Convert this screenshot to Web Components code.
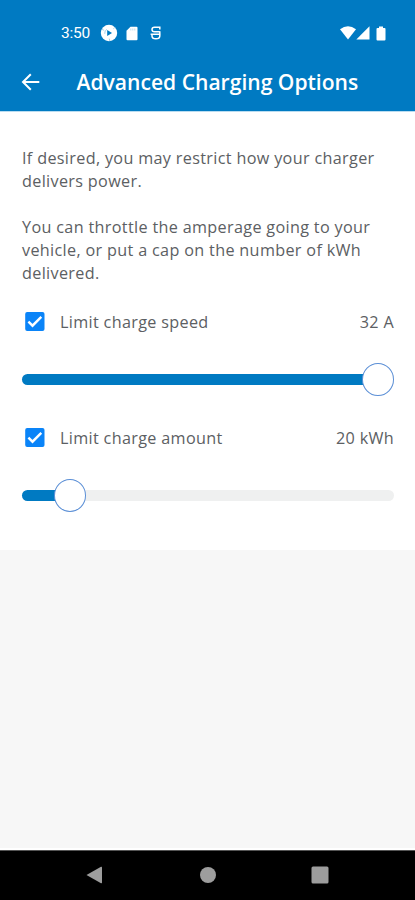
<!DOCTYPE html>
<html lang="en">
<head>
<meta charset="utf-8">
<title>Advanced Charging Options</title>
<style>
html, body { margin: 0; height: 900px; overflow: hidden; }
body { background: #f7f7f7; color: #5c6063; font: 16.2px/23px "Open Sans", sans-serif; letter-spacing: .33px; }
</style>
</head>
<body>
<charging-screen></charging-screen>
<script>
function define(name, html, setup) {
  const template = document.createElement('template');
  template.innerHTML = html;
  customElements.define(name, class extends HTMLElement {
    constructor() {
      super();
      this.attachShadow({ mode: 'open' }).append(template.content.cloneNode(true));
    }
    connectedCallback() { if (setup) setup(this); }
  });
}

define('status-bar', `
<style>
:host { display: flex; align-items: center; height: 24px; padding: 21px 28px 0 61px; color: #fff; font: 400 15.5px/24px Roboto, sans-serif; }
span { width: 39px; letter-spacing: -.2px; }
svg { fill: #fff; display: block; }
.gap { flex: 1; }
</style>
<span>3:50</span>
<svg width="18" height="18" viewBox="0 0 18 18"><circle cx="9" cy="9" r="8.200"/><path d="M7.200 6 12 9l-4.800 3z" fill="#007ac2"/><path d="M4.800 9.800A4.200 4.200 0 0 1 7 5.300M2 5.400l2.200 1M9.800 17l-.5-2.400M14.800 3.500l-1.500 1.300" fill="none" stroke="#007ac2" stroke-width=".8" opacity=".45"/></svg>
<svg width="12" height="15" viewBox="0 0 12 15" style="margin-left:8px"><path d="M4.500 .7H10.500q1 0 1 1v11.500q0 1-1 1H1.500q-1 0-1-1V4.700z"/><path d="M4.800 2.500v2M6.800 2.500v2M8.800 2.500v2" stroke="#007ac2" stroke-width=".8" opacity=".3"/></svg>
<svg width="12" height="16" viewBox="0 0 12 16" style="margin-left:12px;fill:none;stroke:#fff;stroke-width:1.500"><path d="M9.800 4.500V2.300H4.500Q2 2.300 2 4.500T4.500 6.800H9.800M.6 9.200H10.600M2 9.200V11q0 2.800 3.900 2.800T9.800 11V6.300"/></svg>
<div class="gap"></div>
<svg width="16" height="14" viewBox="0 0 16 14"><path d="M0 3.300Q8-3 16 3.300L8 13.500z"/></svg>
<svg width="14" height="14" viewBox="0 0 14 14"><path d="M13.500 .3V13.500H.3z"/></svg>
<svg width="10" height="15" viewBox="0 0 10 15" style="margin-left:6px;margin-right:1px"><path d="M3 .5h4V2h1.500q1 0 1 1v10.500q0 1-1 1h-7q-1 0-1-1V3q0-1 1-1H3z"/></svg>
`);

define('app-header', `
<style>
:host { display: block; height: 111px; background: #007ac2; border-bottom: 1px solid #b9dcf0; color: #fff; }
nav { display: flex; align-items: center; height: 36px; margin-top: 18px; padding-left: 21px; }
svg { width: 19px; height: 18px; fill: none; stroke: #fff; stroke-width: 2; margin-top: 2px; }
h1 { margin: 1px 0 0 36.500px; font: 600 21.080px/35px "Open Sans", sans-serif; letter-spacing: 0; white-space: nowrap; }
</style>
<status-bar></status-bar>
<nav><svg viewBox="0 0 19 18"><path d="M18.300 9H2M9.800 1.200 2 9l7.800 7.800"/></svg><h1><slot></slot></h1></nav>
`);

define('limit-option', `
<style>
:host { display: flex; align-items: center; height: 26px; line-height: 26px; }
svg { width: 20px; height: 19px; margin: -2px 15px 0 3px; }
.label { flex: 1; }
</style>
<svg viewBox="0 0 20 19"><rect x=".2" width="19.300" height="19" rx="2" fill="#0a84f8"/><path d="M3.400 9.700 7.500 13.700 16.300 4.800" fill="none" stroke="#fff" stroke-width="2.400"/></svg>
<span class="label"><slot></slot></span><slot name="value"></slot>
`);

define('range-slider', `
<style>
:host { display: flex; align-items: center; height: 34px; }
.fill { flex: none; height: 11px; width: var(--fill); border-radius: 6px 0 0 6px; background: #007ac2; }
.thumb { flex: none; box-sizing: border-box; width: 32px; height: 33px; margin: 0 -2px; border: 1px solid #5b8fd6; border-radius: 50%; background: #fff; z-index: 1; }
.rest { flex: 1; height: 11px; border-radius: 0 6px 6px 0; background: #eff0f0; }
</style>
<div class="fill"></div><div class="thumb"></div><div class="rest"></div>
`, el => el.style.setProperty('--fill', el.getAttribute('fill') + 'px'));

define('system-nav', `
<style>
:host { display: flex; align-items: center; justify-content: space-between; box-sizing: border-box; height: 50px; padding: 0 86px 1px; background: #000; border-top: 1px solid #555; }
svg { width: 18px; height: 18px; fill: #9d9d9d; }
</style>
<svg viewBox="0 0 18 18"><path d="M.5 9 15 .8q1-.4 1 .6v15.200q0 1-1 .6z"/></svg>
<svg viewBox="0 0 18 18"><circle cx="9" cy="9" r="8"/></svg>
<svg viewBox="0 0 18 18"><rect x=".5" y=".5" width="17" height="17" rx="1.500"/></svg>
`);

define('charging-screen', `
<style>
:host { display: flex; flex-direction: column; height: 900px; background: #f7f7f7; }
main { box-sizing: border-box; height: 438px; padding: 35px 21px 0 22px; background: #fff; }
p { margin: 0 0 23px; white-space: nowrap; }
limit-option { margin-top: 24px; }
range-slider { margin-top: 27px; }
.second { margin-top: 29px; }
.space { flex: 1; border-bottom: 2px solid #fff; }
</style>
<app-header>Advanced Charging Options</app-header>
<main>
<p>If desired, you may restrict how your charger<br>delivers power.</p>
<p>You can throttle the amperage going to your<br>vehicle, or put a cap on the number of kWh<br>delivered.</p>
<limit-option>Limit charge speed<span slot="value">32 A</span></limit-option>
<range-slider fill="342"></range-slider>
<limit-option class="second">Limit charge amount<span slot="value">20 kWh</span></limit-option>
<range-slider fill="34"></range-slider>
</main>
<div class="space"></div>
<system-nav></system-nav>
`);
</script>
</body>
</html>
